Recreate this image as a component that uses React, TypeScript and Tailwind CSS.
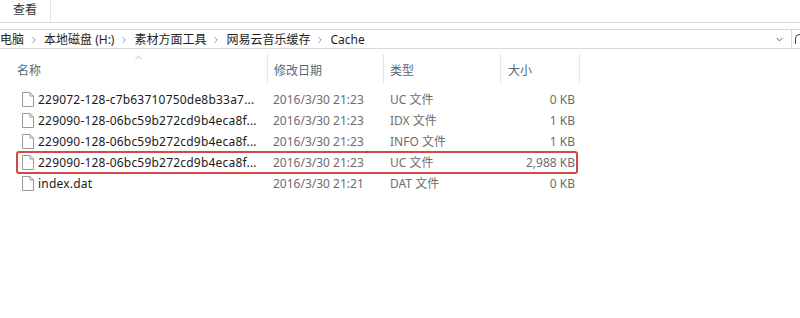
import { ChevronRight, ChevronDown, ChevronUp } from 'lucide-react'

const files = [
  { name: '229072-128-c7b63710750de8b33a7...', date: '2016/3/30 21:23', type: 'UC 文件', size: '0 KB' },
  { name: '229090-128-06bc59b272cd9b4eca8f...', date: '2016/3/30 21:23', type: 'IDX 文件', size: '1 KB' },
  { name: '229090-128-06bc59b272cd9b4eca8f...', date: '2016/3/30 21:23', type: 'INFO 文件', size: '1 KB' },
  { name: '229090-128-06bc59b272cd9b4eca8f...', date: '2016/3/30 21:23', type: 'UC 文件', size: '2,988 KB', marked: true },
  { name: 'index.dat', date: '2016/3/30 21:21', type: 'DAT 文件', size: '0 KB' },
]

const crumbs = ['电脑', '本地磁盘 (H:)', '素材方面工具', '网易云音乐缓存', 'Cache']

function FileIcon() {
  return (
    <svg width="12" height="15" viewBox="0 0 12 15" className="shrink-0">
      <path d="M0.5 0.5 H8 L11.5 4 V14.5 H0.5 Z" fill="#fff" stroke="#9a9a9a" />
      <path d="M8 0.5 V4 H11.5" fill="none" stroke="#9a9a9a" />
    </svg>
  )
}

export default function App() {
  return (
    <div
      className="w-[800px] h-[318px] bg-white overflow-hidden text-[12px]"
      style={{ fontFamily: '"Noto Sans", "Noto Sans CJK SC", sans-serif' }}
    >
      {/* Ribbon */}
      <div className="h-[23px] flex border-b border-[#dadbdc]">
        <div className="w-[51px] flex items-center justify-center border-r border-[#e3e3e3] text-[#333] pb-[2px]">查看</div>
      </div>

      {/* Address bar */}
      <div className="mt-[6px] h-[20px] flex items-center border-y border-[#d9d9d9]">
        <div className="flex-1 flex items-center text-[#1e1e1e] whitespace-nowrap pt-[1px]">
          {crumbs.map((c, i) => (
            <div key={i} className="flex items-center">
              <span>{c}</span>
              {i < crumbs.length - 1 && <ChevronRight size={10} strokeWidth={1.5} className="mx-[5px] text-[#555]" />}
            </div>
          ))}
        </div>
        <ChevronDown size={11} strokeWidth={1.8} className="text-[#444] mr-[6px]" />
        <div className="h-full border-l border-[#d9d9d9] w-[4px]" />
        <div className="w-[5px] h-[10px] border-l-[1.5px] border-t-[1.5px] border-[#444] rounded-tl-full" />
      </div>

      {/* Column headers */}
      <div className="relative h-[40px] flex items-center text-[#56677a]">
        <ChevronUp size={11} strokeWidth={1.3} className="absolute left-[133px] top-[3px] text-[#888]" />
        <div className="w-[267px] pl-[17px] self-stretch flex items-center pt-[3px]">名称</div>
        <div className="w-[116px] pl-[6px] border-l border-[#e5e5e5] h-[30px] flex items-center pt-[3px]">修改日期</div>
        <div className="w-[117px] pl-[6px] border-l border-[#e5e5e5] h-[30px] flex items-center pt-[3px]">类型</div>
        <div className="w-[80px] pl-[7px] border-l border-r border-[#e5e5e5] h-[30px] flex items-center pt-[3px]">大小</div>
      </div>

      {/* File list */}
      <div className="pl-[17px]">
        {files.map((f, i) => (
          <div
            key={i}
            className={`w-[560px] h-[21px] flex items-center rounded-[2px] ${
              f.marked ? 'outline-2 outline-[#d24a48] -outline-offset-1' : ''
            }`}
          >
            <div className="w-[250px] flex items-center gap-[4px] pl-[5px] text-[#1a1a1a] whitespace-nowrap">
              <FileIcon />
              <span className="tracking-[0.2px]">{f.name}</span>
            </div>
            <div className="w-[116px] pl-[6px] text-[#6d6d6d]">{f.date}</div>
            <div className="w-[117px] pl-[7px] text-[#6d6d6d]">{f.type}</div>
            <div className="w-[75px] text-right text-[#6d6d6d]">{f.size}</div>
          </div>
        ))}
      </div>
    </div>
  )
}
